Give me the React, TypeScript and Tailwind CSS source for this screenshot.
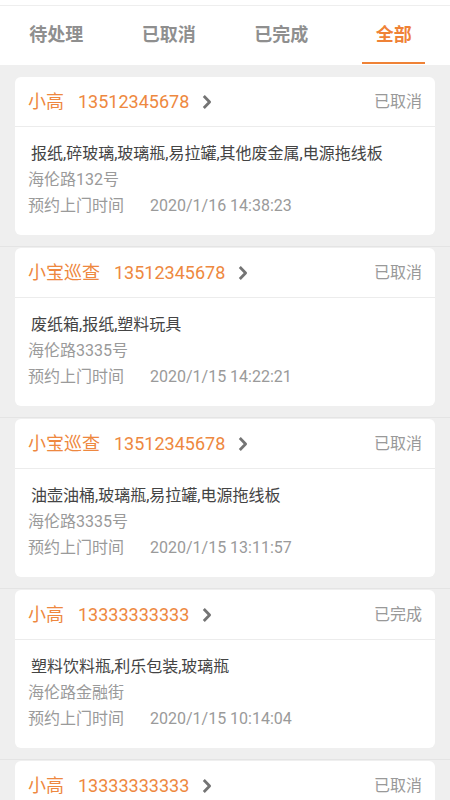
import React, { useState } from 'react'

interface Order {
  id: number
  name: string
  phone: string
  status: string
  items: string
  address: string
  time: string
}

const orders: Order[] = [
  { id: 1, name: '小高', phone: '13512345678', status: '已取消', items: '报纸,碎玻璃,玻璃瓶,易拉罐,其他废金属,电源拖线板', address: '海伦路132号', time: '2020/1/16 14:38:23' },
  { id: 2, name: '小宝巡查', phone: '13512345678', status: '已取消', items: '废纸箱,报纸,塑料玩具', address: '海伦路3335号', time: '2020/1/15 14:22:21' },
  { id: 3, name: '小宝巡查', phone: '13512345678', status: '已取消', items: '油壶油桶,玻璃瓶,易拉罐,电源拖线板', address: '海伦路3335号', time: '2020/1/15 13:11:57' },
  { id: 4, name: '小高', phone: '13333333333', status: '已完成', items: '塑料饮料瓶,利乐包装,玻璃瓶', address: '海伦路金融街', time: '2020/1/15 10:14:04' },
  { id: 5, name: '小高', phone: '13333333333', status: '已取消', items: '废纸箱,报纸', address: '海伦路金融街', time: '2020/1/15 09:30:12' },
]

const tabs = ['待处理', '已取消', '已完成', '全部']

function Chevron() {
  return (
    <svg width="12" height="18" viewBox="0 0 12 18" fill="none" className="shrink-0">
      <path d="M2.8 3 L8.6 9 L2.8 15" stroke="#747474" strokeWidth="2.8" strokeLinejoin="round" />
    </svg>
  )
}

function OrderCard({ order }: { order: Order }) {
  return (
    <div className="bg-white rounded-[6px]">
      {/* header */}
      <div className="h-[50px] flex items-center justify-between pl-[13px] pr-[13px] border-b border-[#ececec]">
        <div className="flex items-center text-[18px] text-[#ee8840]">
          <span className="mr-[14px]">{order.name}</span>
          <span className="mr-[12px]">{order.phone}</span>
          <Chevron />
        </div>
        <span className="text-[16px] text-[#999999]">{order.status}</span>
      </div>
      {/* body */}
      <div className="pl-[13px] pr-[13px] pt-[14px] pb-[16px] text-[16px] leading-[26px]">
        <div className="text-[#444444] pl-[3px]">{order.items}</div>
        <div className="text-[#9a9a9a]">{order.address}</div>
        <div className="text-[#9a9a9a] flex">
          <span className="w-[122px]">预约上门时间</span>
          <span>{order.time}</span>
        </div>
      </div>
    </div>
  )
}

export default function App() {
  const [active, setActive] = useState(3)

  return (
    <div
      className="min-h-screen bg-[#efefef]"
      style={{ fontFamily: 'Roboto, "Noto Sans CJK SC", sans-serif' }}
    >
      {/* Tabs */}
      <div className="bg-white">
        <div className="h-[5px]" />
        <div className="h-[60px] border-t border-[#eeeeee] grid grid-cols-4">
          {tabs.map((t, i) => (
            <button
              key={t}
              onClick={() => setActive(i)}
              className="flex flex-col items-center h-full"
            >
              <span
                className={
                  'flex-1 flex items-center text-[18px] font-bold ' +
                  (i === active ? 'text-[#ef8236]' : 'text-[#8f8f8f]')
                }
              >
                {t}
              </span>
              <span
                className={
                  'h-[2px] w-[63px] mb-[1px] ' + (i === active ? 'bg-[#ef8236]' : 'bg-transparent')
                }
              />
            </button>
          ))}
        </div>
      </div>

      {/* List */}
      <div className="pt-[11px]">
        {orders.map((o) => (
          <div key={o.id} className="pt-[1px] pb-[11px] px-[15px] border-b border-[#e4e4e4]">
            <OrderCard order={o} />
          </div>
        ))}
      </div>
    </div>
  )
}
